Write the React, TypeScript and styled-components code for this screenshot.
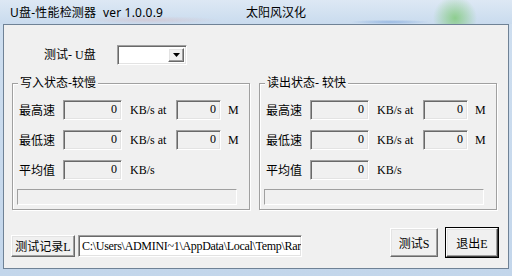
import React from 'react';
import styled, { createGlobalStyle } from 'styled-components';

const GlobalStyle = createGlobalStyle`
  html, body {
    margin: 0;
    padding: 0;
  }
  body {
    width: 512px;
    height: 276px;
    overflow: hidden;
    background: #c3d6eb;
  }
`;

const SERIF = `"Liberation Serif", "Noto Sans CJK SC", serif`;

const Window = styled.div`
  width: 512px;
  height: 276px;
  display: flex;
  flex-direction: column;
  background: linear-gradient(180deg, #cfdff0 0%, #c3d6eb 100%);
`;

const TitleBar = styled.div`
  height: 24px;
  flex: none;
  display: flex;
  align-items: center;
  padding-left: 10px;
  font-family: "Noto Sans", "Noto Sans CJK SC", sans-serif;
  font-size: 12px;
  color: #000;
  white-space: pre;
  background:
    radial-gradient(circle at 455px 18px, rgba(120, 200, 110, 0.75) 0, rgba(120, 200, 110, 0) 22px),
    radial-gradient(ellipse at 390px 22px, rgba(90, 140, 210, 0.45) 0, rgba(90, 140, 210, 0) 40px),
    radial-gradient(ellipse at 150px 20px, rgba(220, 170, 170, 0.35) 0, rgba(220, 170, 170, 0) 70px),
    linear-gradient(180deg, #dde8f4 0%, #c9dbee 100%);
`;

const TitleMain = styled.span`
  width: 236px;
  letter-spacing: 0.2px;
`;

const Client = styled.div`
  flex: 1;
  margin: 0 3px 7px 3px;
  border: 1px solid #6f8296;
  background: #f0f0f0;
  display: flex;
  flex-direction: column;
  font-family: ${SERIF};
  font-size: 12px;
  color: #000;
`;

const TopRow = styled.div`
  display: flex;
  align-items: center;
  padding: 20px 0 0 40px;
`;

const ComboLabel = styled.span`
  width: 73px;
  line-height: 20px;
`;

const sunken = `
  border-style: solid;
  border-width: 1px;
  border-color: #a0a0a0 #ffffff #ffffff #a0a0a0;
  box-shadow: inset 1px 1px 0 #696969, inset -1px -1px 0 #e3e3e3;
  box-sizing: border-box;
`;

const raised = `
  border-style: solid;
  border-width: 1px;
  border-color: #ffffff #696969 #696969 #ffffff;
  box-shadow: inset -1px -1px 0 #a0a0a0, inset 1px 1px 0 #e3e3e3;
  box-sizing: border-box;
  background: #f0f0f0;
`;

const Combo = styled.div`
  ${sunken}
  width: 70px;
  height: 20px;
  background: #fff;
  display: flex;
  justify-content: flex-end;
  padding: 2px;
`;

const DropButton = styled.div`
  ${raised}
  width: 16px;
  height: 100%;
  display: flex;
  align-items: center;
  justify-content: center;
`;

const GroupsRow = styled.div`
  display: flex;
  gap: 9px;
  padding: 18px 0 0 8px;
`;

const GroupBox = styled.div`
  position: relative;
  width: 238px;
  box-sizing: border-box;
  border: 1px solid #a0a0a0;
  box-shadow: inset 1px 1px 0 #fff, 1px 1px 0 #fff;
  padding: 16px 0 4px 6px;
  display: flex;
  flex-direction: column;
  gap: 10px;
`;

const GroupTitle = styled.span`
  position: absolute;
  top: -7px;
  left: 5px;
  padding: 0 2px;
  line-height: 13px;
  background: #f0f0f0;
`;

const Row = styled.div`
  display: flex;
  align-items: center;
  height: 20px;
`;

const RowLabel = styled.span`
  width: 44px;
`;

const ValueBox = styled.div<{ $w: number }>`
  ${sunken}
  width: ${({ $w }) => $w}px;
  height: 20px;
  background: #f0f0f0;
  text-align: right;
  padding-right: 4px;
  line-height: 16px;
`;

const Unit = styled.span<{ $ml: number; $w?: number }>`
  margin-left: ${({ $ml }) => $ml}px;
  ${({ $w }) => ($w ? `width: ${$w}px;` : '')}
`;

const Progress = styled.div`
  width: 220px;
  height: 16px;
  margin: -1px 0 0 -2px;
  box-sizing: border-box;
  border-style: solid;
  border-width: 1px;
  border-color: #a0a0a0 #ffffff #ffffff #a0a0a0;
`;

const BottomRow = styled.div`
  display: flex;
  align-items: flex-end;
  padding: 0 10px 11px 7px;
  margin-top: auto;
`;

const Button = styled.button<{ $w: number; $h: number; $default?: boolean }>`
  ${raised}
  width: ${({ $w }) => $w}px;
  height: ${({ $h }) => $h}px;
  padding: 0;
  font-family: ${SERIF};
  font-size: 12px;
  color: #000;
  ${({ $default }) =>
    $default &&
    `
    outline: 1px solid #000;
    outline-offset: 0;
    border-color: #ffffff #404040 #404040 #ffffff;
  `}
`;

const PathBox = styled.div`
  ${sunken}
  width: 224px;
  height: 22px;
  margin-left: 3px;
  background: #fff;
  padding: 0 0 0 3px;
  line-height: 20px;
  letter-spacing: -0.3px;
  white-space: nowrap;
  overflow: hidden;
`;

const Spacer = styled.div`
  flex: 1;
`;

const ButtonGap = styled.div`
  width: 8px;
`;

type Stat = { label: string; value: string; at?: string };

const stats: Stat[] = [
  { label: '最高速', value: '0', at: '0' },
  { label: '最低速', value: '0', at: '0' },
  { label: '平均值', value: '0' },
];

const Group = ({ title }: { title: string }) => (
  <GroupBox>
    <GroupTitle>{title}</GroupTitle>
    {stats.map((s) => (
      <Row key={s.label}>
        <RowLabel>{s.label}</RowLabel>
        <ValueBox $w={59}>{s.value}</ValueBox>
        {s.at !== undefined ? (
          <>
            <Unit $ml={8} $w={46}>KB/s at</Unit>
            <ValueBox $w={45}>{s.at}</ValueBox>
            <Unit $ml={7}>M</Unit>
          </>
        ) : (
          <Unit $ml={8}>KB/s</Unit>
        )}
      </Row>
    ))}
    <Progress />
  </GroupBox>
);

export default function App() {
  return (
    <Window>
      <GlobalStyle />
      <TitleBar>
        <TitleMain>U盘-性能检测器  ver 1.0.0.9</TitleMain>
        <span>太阳风汉化</span>
      </TitleBar>
      <Client>
        <TopRow>
          <ComboLabel>测试- U盘</ComboLabel>
          <Combo>
            <DropButton>
              <svg width="7" height="4" viewBox="0 0 7 4">
                <path d="M0 0h7L3.5 4z" fill="#000" />
              </svg>
            </DropButton>
          </Combo>
        </TopRow>
        <GroupsRow>
          <Group title="写入状态-较慢" />
          <Group title="读出状态- 较快" />
        </GroupsRow>
        <BottomRow>
          <Button $w={64} $h={22}>测试记录L</Button>
          <PathBox>C:\Users\ADMINI~1\AppData\Local\Temp\Rar</PathBox>
          <Spacer />
          <Button $w={48} $h={29}>测试S</Button>
          <ButtonGap />
          <Button $w={52} $h={29} $default>退出E</Button>
        </BottomRow>
      </Client>
    </Window>
  );
}
